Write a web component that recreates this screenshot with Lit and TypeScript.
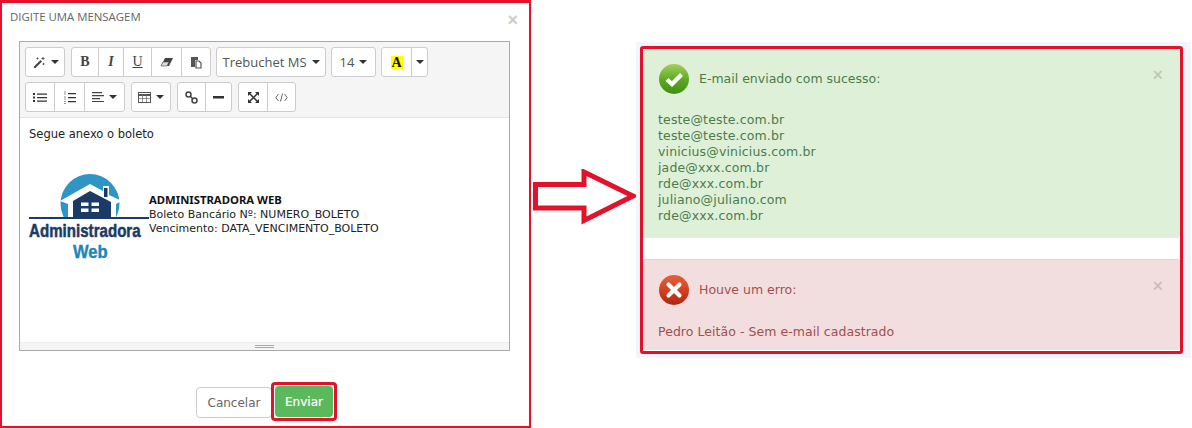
import { LitElement, html, css, svg } from "lit";
import { customElement } from "lit/decorators.js";

const ic = (w: number, h: number, body: unknown) => html`<svg class="ic" width=${w} height=${h} viewBox="0 0 ${w} ${h}">${body}</svg>`;
const caret = html`<span class="caret"></span>`;

const wand = ic(14, 12, svg`<path d="M1.500 11 8.500 4 10 5.500 3 12.500Z" fill="#444"/><path d="M11 1v3M9.500 2.500h3M5.500 1.500v2M4.500 2.500h2M11.500 7v2M10.500 8h2" stroke="#555" fill="none"/>`);
const eraser = ic(14, 10, svg`<path d="M5 1h8L9 9H1Z" fill="#444"/><path d="M3 5h6L7 9H1Z" fill="#ddd" stroke="#444" stroke-width=".6"/>`);
const paste = ic(12, 13, svg`<path d="M1 1h7v3H5v7H1Z" fill="#555"/><path d="M6 5h3l2 2v5H6Z" fill="#fff" stroke="#555" stroke-width="1.200"/>`);
const ul = ic(14, 10, svg`<path d="M0 1h2v2H0ZM0 4.500h2v2H0ZM0 8h2v2H0Z" fill="#333"/><path d="M4 1.500h10v1.200H4ZM4 5h10v1.200H4ZM4 8.500h10v1.200H4Z" fill="#333"/>`);
const ol = ic(12, 13, svg`<path d="M0 1h2M0 3h2M0 6h2M0 8h2M0 10.500h2M0 12.500h2" stroke="#777" stroke-width=".8"/><path d="M4 2h8v1.200H4ZM4 6h8v1.200H4ZM4 10h8v1.200H4Z" fill="#333"/>`);
const align = ic(12, 10, svg`<path d="M0 0h10v1.200H0ZM0 3h12v1.200H0ZM0 6h8v1.200H0ZM0 9h12v1.200H0Z" fill="#444"/>`);
const table = ic(13, 11, svg`<rect x=".5" y=".5" width="12" height="10" fill="#fff" stroke="#555"/><path d="M.5 3h12" stroke="#555" stroke-width="2"/><path d="M4.500 3v7M8.500 3v7M.5 6.500h12" stroke="#777" stroke-width=".8"/>`);
const link = ic(13, 13, svg`<circle cx="3.500" cy="3.500" r="2.500" fill="none" stroke="#444" stroke-width="1.500"/><circle cx="9.500" cy="9.500" r="2.500" fill="none" stroke="#444" stroke-width="1.500"/><path d="M5.500 5.500l2 2" stroke="#444" stroke-width="1.500"/>`);
const hr = ic(11, 3, svg`<rect width="11" height="2.500" fill="#333"/>`);
const full = ic(11, 11, svg`<path d="M0 0h4L0 4ZM11 0v4L7 0ZM0 11V7l4 4ZM11 11H7l4-4Z" fill="#333"/><path d="M1.500 1.500l8 8M9.500 1.500l-8 8" stroke="#333" stroke-width="1.500"/>`);
const code = ic(13, 9, svg`<path d="M3.500 1 .8 4.500 3.500 8M9.500 1l2.700 3.500L9.500 8M7.500.5l-2 8" fill="none" stroke="#666"/>`);

const okIcon = html`<svg class="status" width="32" height="32" viewBox="0 0 32 32"><defs><linearGradient id="g" x1="0" y1="0" x2="0" y2="1"><stop offset="0" stop-color="#a6cf5c"/><stop offset=".55" stop-color="#5ca722"/><stop offset="1" stop-color="#3f8f12"/></linearGradient></defs><circle cx="16" cy="16" r="15" fill="url(#g)"/><path d="M9 16.500 14 21 23.500 11.500" fill="none" stroke="#fff" stroke-width="4.200"/></svg>`;
const errIcon = html`<svg class="status" width="32" height="32" viewBox="0 0 32 32"><defs><linearGradient id="r" x1="0" y1="0" x2="0" y2="1"><stop offset="0" stop-color="#e8603c"/><stop offset=".6" stop-color="#d13a1c"/><stop offset="1" stop-color="#a92712"/></linearGradient></defs><circle cx="16" cy="16" r="15" fill="url(#r)"/><path d="M10.500 10.500l11 11M21.500 10.500l-11 11" fill="none" stroke="#fff" stroke-width="4.200" stroke-linecap="round"/></svg>`;

const logo = html`<svg class="logo" width="120" height="90" viewBox="0 0 120 90">
  <defs><clipPath id="c"><rect width="120" height="45"/></clipPath></defs>
  <circle cx="61" cy="30.500" r="29.500" fill="#2f95c5" clip-path="url(#c)"/>
  <path d="M31 28 61 11 74 18V13h6v9l13 6-6 3V45H39V31Z" fill="#fff"/>
  <path d="M44 45V28L61 18 82 29V45Z" fill="#1c3a66"/>
  <path d="M75 15h3.500v9H75Z" fill="#1c3a66"/>
  <path d="M52 29.500h7.500v3.500H52ZM62.500 29.500H70v3.500h-7.500ZM52 35.500h7.500V39H52ZM62.500 35.500H70V39h-7.500Z" fill="#fff"/>
  <rect x="0" y="44" width="120" height="2" fill="#1c3a66"/>
  <text transform="translate(0 64) scale(.84 1)" font-family="Liberation Sans, sans-serif" font-weight="700" font-size="18" fill="#1c3a66" stroke="#1c3a66" stroke-width=".5">Administradora</text>
  <text transform="translate(44 84.500) scale(.92 1)" font-family="Liberation Sans, sans-serif" font-weight="700" font-size="18" fill="#1f86b8" stroke="#1f86b8" stroke-width=".4">Web</text>
</svg>`;

const arrow = html`<svg width="106" height="56" viewBox="0 0 106 56"><path d="M2.500 15.500H51V3L100 27 51 51.500V39H2.500Z" fill="#fff" stroke="#e4112b" stroke-width="5"/></svg>`;

@customElement("app-root")
export class AppRoot extends LitElement {
  static styles = css`
    :host { display: flex; width: 1192px; height: 428px; background: #fff; font-family: "DejaVu Sans", Verdana, sans-serif; overflow: hidden; }
    * { box-sizing: border-box; }
    .modal { width: 531px; height: 428px; border: 2px solid #e4112b; border-top-width: 3px; padding: 0 0 0 17px; display: flex; flex-direction: column; position: relative; }
    .head { height: 38px; margin-left: -9px; padding-top: 6px; color: #666; font-family: "Open Sans", sans-serif; font-size: 11.400px; text-transform: uppercase; }
    .x { position: absolute; color: #ccc; font-family: "Liberation Sans", sans-serif; font-weight: 700; line-height: 1; font-size: 18px; }
    .modal .x { right: 11px; top: 8px; }
    .editor { width: 491px; height: 310px; border: 1px solid #aaa; display: flex; flex-direction: column; }
    .tools { height: 76px; background: #f5f5f5; border-bottom: 1px solid #e4e4e4; padding: 5px 5px 0; display: flex; flex-direction: column; gap: 5px; }
    .row { display: flex; gap: 5px; height: 30px; }
    .row.r2 { gap: 6px; }
    .first { margin-right: 1px; }
    .grp { display: flex; height: 30px; background: #fff; border: 1px solid #ccc; border-radius: 3px; }
    .b { display: flex; align-items: center; justify-content: center; gap: 5px; border-left: 1px solid #ccc; height: 100%; color: #333; font-size: 13px; }
    .b:first-child { border-left: 0; }
    .t { font-family: "Liberation Serif", serif; font-size: 14px; color: #444; }
    .caret { width: 0; height: 0; border-left: 4px solid transparent; border-right: 4px solid transparent; border-top: 4px solid #333; }
    .font { font-family: "Open Sans", sans-serif; font-size: 13px; color: #555; }
    .hl { background: #ff0; color: #111; font: 700 14px/13px "Liberation Serif", serif; padding: 0 2px; width: 12px; display: flex; justify-content: center; }
    .body { flex: 1; padding: 8px 9px; font-size: 11.500px; color: #222; }
    .seg { line-height: 16px; }
    .sig { display: flex; align-items: flex-start; margin-top: 31px; }
    .sig .logo { flex: none; display: block; }
    .sigt { font-size: 11px; line-height: 14.500px; margin-top: 20px; white-space: nowrap; margin-left: 0; }
    .sigt b { display: block; color: #111; font-family: "Noto Sans", sans-serif; font-size: 11.300px; }
    .bar { height: 8px; background: #f5f5f5; border-top: 1px solid #eee; display: flex; flex-direction: column; align-items: center; justify-content: center; gap: 1px; }
    .bar i { display: block; width: 19px; height: 1px; background: #aaa; }
    .foot { display: flex; justify-content: flex-end; align-items: flex-start; margin-top: 31px; padding-right: 192px; }
    .btn { font-family: "DejaVu Sans", sans-serif; font-size: 12px; border-radius: 4px; height: 31px; display: flex; align-items: center; justify-content: center; }
    .cancel { width: 76px; margin-top: 5px; border: 1px solid #ccc; color: #666; background: #fff; }
    .okwrap { border: 3px solid #e4112b; border-radius: 4px; padding: 1px; height: 39px; margin-left: -1px; background: #fff; }
    .ok { width: 58px; height: 31px; background: #5cb85c; color: #fff; -webkit-text-stroke: .2px #fff; }
    .arrow { width: 105px; flex: none; padding: 169px 0 0 2px; }
    .shot { width: 555px; height: 316px; margin-top: 42px; padding: 4px 8px 4px 4px; background: #f2f5fb; }
    .frame { width: 543px; height: 308px; border: 3px solid #e4112b; border-radius: 3px; background: #fff; display: flex; flex-direction: column; font-size: 12.500px; }
    .alert { position: relative; padding: 14px 15px 0; border-radius: 3px; }
    .green { height: 189px; background: #dff0d8; color: #4a7c4b; }
    .red { height: 91px; margin-top: 21px; background: #f2dede; color: #a34f4f; border-top: 1px solid #ebcccc; }
    .title { display: flex; align-items: center; gap: 9px; height: 32px; margin-bottom: 17px; }
    .title span { margin-top: -2px; }
    .status { display: block; flex: none; }
    .lines div { line-height: 16px; letter-spacing: .15px; }
    .alert .x { right: 17px; top: 17px; color: rgba(0,0,0,.16); font-size: 18px; }
    .red .title { margin-bottom: 18px; }
    .red .lines div { letter-spacing: .05px; }
    .red .x { top: 17px; }
  `;

  render() {
    return html`
      <section class="modal">
        <div class="head">Digite uma mensagem</div>
        <span class="x">×</span>
        <div class="editor">
          <div class="tools">
            <div class="row">
              <div class="grp first"><span class="b" style="width:38px">${wand}${caret}</span></div>
              <div class="grp">
                <span class="b t" style="width:26px"><b>B</b></span>
                <span class="b t" style="width:25px"><b><i>I</i></b></span>
                <span class="b t" style="width:28px"><u>U</u></span>
                <span class="b" style="width:30px">${eraser}</span>
                <span class="b" style="width:29px">${paste}</span>
              </div>
              <div class="grp"><span class="b font" style="width:108px">Trebuchet MS ${caret}</span></div>
              <div class="grp"><span class="b font" style="width:43px">14 ${caret}</span></div>
              <div class="grp">
                <span class="b" style="width:29px"><span class="hl">A</span></span>
                <span class="b" style="width:16px">${caret}</span>
              </div>
            </div>
            <div class="row r2">
              <div class="grp">
                <span class="b" style="width:28px">${ul}</span>
                <span class="b" style="width:30px">${ol}</span>
                <span class="b" style="width:40px">${align}${caret}</span>
              </div>
              <div class="grp"><span class="b" style="width:38px">${table}${caret}</span></div>
              <div class="grp">
                <span class="b" style="width:27px">${link}</span>
                <span class="b" style="width:26px">${hr}</span>
              </div>
              <div class="grp">
                <span class="b" style="width:28px">${full}</span>
                <span class="b" style="width:28px">${code}</span>
              </div>
            </div>
          </div>
          <div class="body">
            <div class="seg">Segue anexo o boleto</div>
            <div class="sig">
              ${logo}
              <div class="sigt">
                <b>ADMINISTRADORA WEB</b>
                <div>Boleto Bancário Nº: NUMERO_BOLETO</div>
                <div>Vencimento: DATA_VENCIMENTO_BOLETO</div>
              </div>
            </div>
          </div>
          <div class="bar"><i></i><i></i></div>
        </div>
        <div class="foot">
          <div class="btn cancel">Cancelar</div>
          <div class="okwrap"><div class="btn ok">Enviar</div></div>
        </div>
      </section>
      <div class="arrow">${arrow}</div>
      <section class="shot">
        <div class="frame">
          <div class="alert green">
            <span class="x">×</span>
            <div class="title">${okIcon}<span>E-mail enviado com sucesso:</span></div>
            <div class="lines">
              <div>teste@teste.com.br</div>
              <div>teste@teste.com.br</div>
              <div>vinicius@vinicius.com.br</div>
              <div>jade@xxx.com.br</div>
              <div>rde@xxx.com.br</div>
              <div>juliano@juliano.com</div>
              <div>rde@xxx.com.br</div>
            </div>
          </div>
          <div class="alert red">
            <span class="x">×</span>
            <div class="title">${errIcon}<span>Houve um erro:</span></div>
            <div class="lines"><div>Pedro Leitão - Sem e-mail cadastrado</div></div>
          </div>
        </div>
      </section>
    `;
  }
}
